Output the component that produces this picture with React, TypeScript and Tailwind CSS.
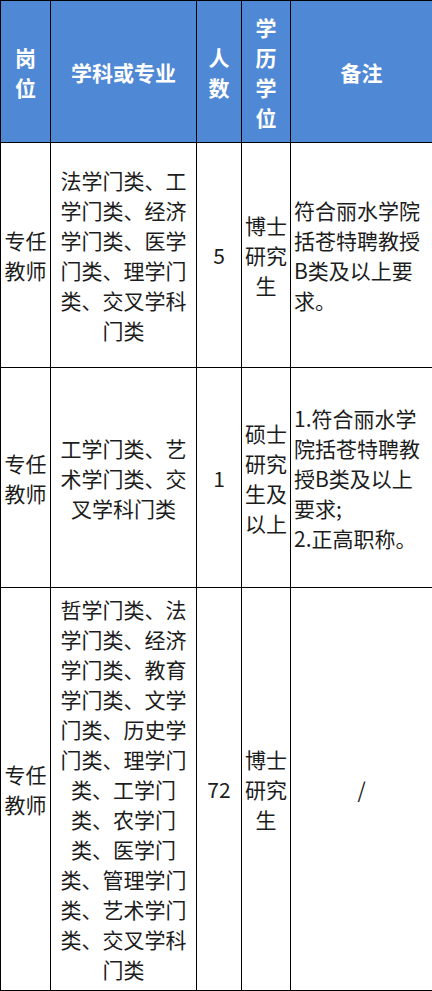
const font = { fontFamily: '"Noto Sans CJK SC", "Microsoft YaHei", sans-serif' }

function Lines({ lines }: { lines: string[] }) {
  return (
    <>
      {lines.map((l, i) => (
        <div key={i} className="whitespace-nowrap">{l}</div>
      ))}
    </>
  )
}

const rows = [
  {
    h: 'h-[225px]',
    post: ['专任', '教师'],
    subject: ['法学门类、工', '学门类、经济', '学门类、医学', '门类、理学门', '类、交叉学科', '门类'],
    num: '5',
    edu: ['博士', '研究', '生'],
    note: ['符合丽水学院', '括苍特聘教授', 'B类及以上要', '求。'],
    noteCenter: false,
  },
  {
    h: 'h-[220px]',
    post: ['专任', '教师'],
    subject: ['工学门类、艺', '术学门类、交', '叉学科门类'],
    num: '1',
    edu: ['硕士', '研究', '生及', '以上'],
    note: ['1.符合丽水学', '院括苍特聘教', '授B类及以上', '要求;', '2.正高职称。'],
    noteCenter: false,
  },
  {
    h: 'h-[403px]',
    post: ['专任', '教师'],
    subject: [
      '哲学门类、法',
      '学门类、经济',
      '学门类、教育',
      '学门类、文学',
      '门类、历史学',
      '门类、理学门',
      '类、工学门',
      '类、农学门',
      '类、医学门',
      '类、管理学门',
      '类、艺术学门',
      '类、交叉学科',
      '门类',
    ],
    num: '72',
    edu: ['博士', '研究', '生'],
    note: ['/'],
    noteCenter: true,
  },
]

export default function App() {
  const cell = 'border border-black align-middle'
  return (
    <div className="w-[432px] bg-white" style={font}>
      <table className="w-[432px] table-fixed border-collapse text-[21px] leading-[30px] text-[#1c1c1c]">
        <colgroup>
          <col className="w-[50px]" />
          <col className="w-[146px]" />
          <col className="w-[45px]" />
          <col className="w-[49px]" />
          <col className="w-[142px]" />
        </colgroup>
        <thead>
          <tr className="h-[142px] bg-[#4f88d4] font-bold text-white">
            <th className={`${cell} text-center font-bold`}>
              <Lines lines={['岗', '位']} />
            </th>
            <th className={`${cell} text-center font-bold`}>学科或专业</th>
            <th className={`${cell} text-center font-bold`}>
              <Lines lines={['人', '数']} />
            </th>
            <th className={`${cell} text-center font-bold`}>
              <Lines lines={['学', '历', '学', '位']} />
            </th>
            <th className={`${cell} text-center font-bold`}>备注</th>
          </tr>
        </thead>
        <tbody>
          {rows.map((r, i) => (
            <tr key={i} className={r.h}>
              <td className={`${cell} text-center`}>
                <Lines lines={r.post} />
              </td>
              <td className={`${cell} text-center`}>
                <Lines lines={r.subject} />
              </td>
              <td className={`${cell} text-center`}>{r.num}</td>
              <td className={`${cell} text-center`}>
                <Lines lines={r.edu} />
              </td>
              <td className={`${cell} ${r.noteCenter ? 'text-center' : 'pl-[3px] text-left'}`}>
                <Lines lines={r.note} />
              </td>
            </tr>
          ))}
        </tbody>
      </table>
    </div>
  )
}
